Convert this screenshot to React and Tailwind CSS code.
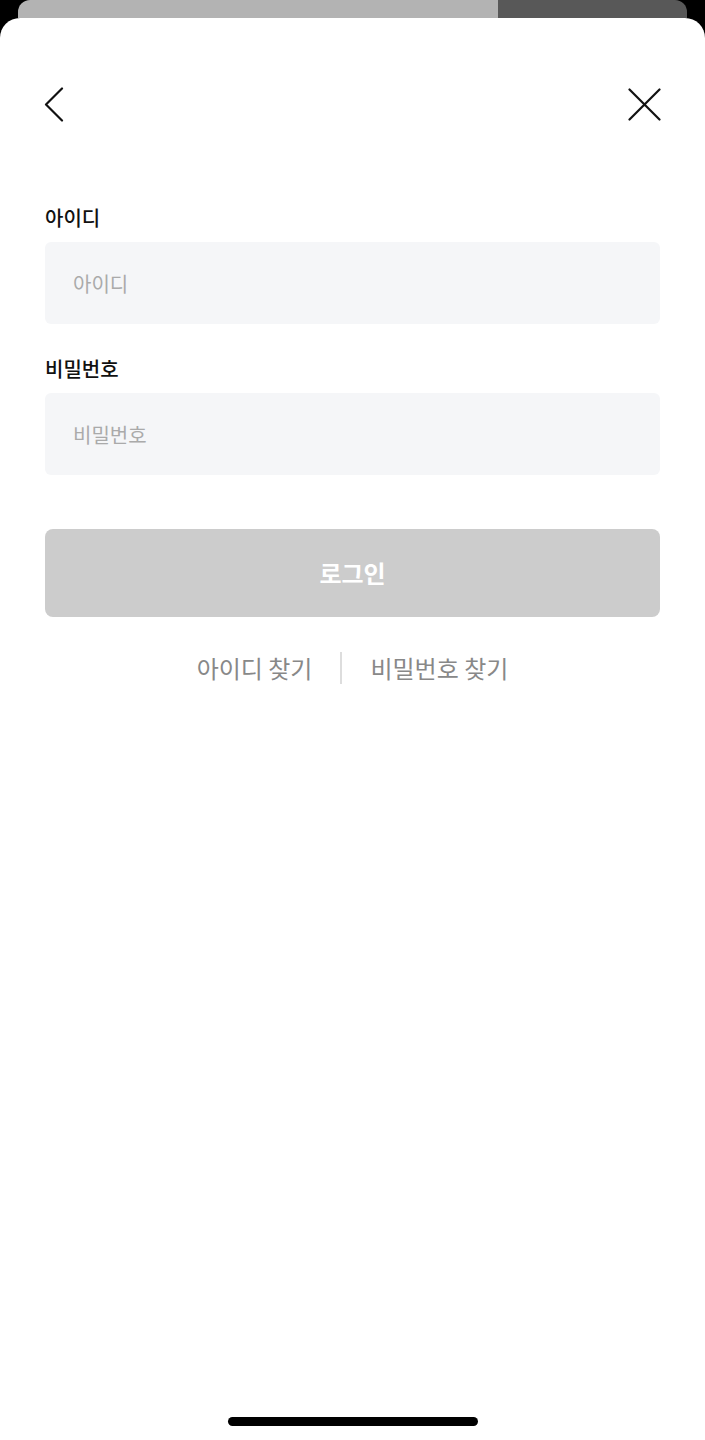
import React from "react";

const font = { fontFamily: '"Noto Sans CJK KR", "Noto Sans", sans-serif' };

const BackIcon = () => (
  <svg width="20" height="35" viewBox="0 0 20 35" fill="none">
    <path d="M18 1.5 L2 17.5 L18 33.5" stroke="#111" strokeWidth="2.2" strokeLinecap="round" strokeLinejoin="round" />
  </svg>
);

const CloseIcon = () => (
  <svg width="33" height="33" viewBox="0 0 33 33" fill="none">
    <path d="M1.5 1.5 L31.5 31.5 M31.5 1.5 L1.5 31.5" stroke="#111" strokeWidth="2.2" strokeLinecap="round" />
  </svg>
);

const Field = ({ label, placeholder, type = "text", className = "" }) => (
  <div className={className}>
    <label className="block text-[20px] leading-[28px] text-[#111] font-medium">{label}</label>
    <input
      type={type}
      placeholder={placeholder}
      className="mt-[10px] w-full h-[82px] rounded-[6px] bg-[#f5f6f8] px-[28px] text-[20px] text-[#111] placeholder:text-[#aaaaaa] outline-none"
      style={font}
    />
  </div>
);

export default function App() {
  return (
    <div className="min-h-[1440px] bg-black" style={font}>
      {/* sheet stacked behind */}
      <div className="mx-[18px] h-[18px] flex rounded-t-[12px] overflow-hidden">
        <div className="w-[480px] bg-[#b3b3b3]" />
        <div className="flex-1 bg-[#585858]" />
      </div>

      <div className="h-[1422px] bg-white rounded-t-[20px] flex flex-col px-[45px]">
        <div className="flex items-center justify-between pt-[69px]">
          <button className="-ml-[1px]"><BackIcon /></button>
          <button className="mr-[-1px]"><CloseIcon /></button>
        </div>

        <Field label="아이디" placeholder="아이디" className="mt-[82px]" />
        <Field label="비밀번호" placeholder="비밀번호" type="password" className="mt-[31px]" />

        <button className="mt-[54px] h-[88px] w-full rounded-[8px] bg-[#cccccc] text-white text-[24px] font-bold">
          로그인
        </button>

        <div className="mt-[33px] flex items-center justify-center text-[24px] text-[#888888]">
          <span>아이디 찾기</span>
          <span className="mx-[28px] w-[2px] h-[32px] bg-[#dddddd]" />
          <span>비밀번호 찾기</span>
        </div>

        <div className="mt-auto mb-[14px] mx-auto w-[250px] h-[9px] rounded-full bg-black" />
      </div>
    </div>
  );
}
